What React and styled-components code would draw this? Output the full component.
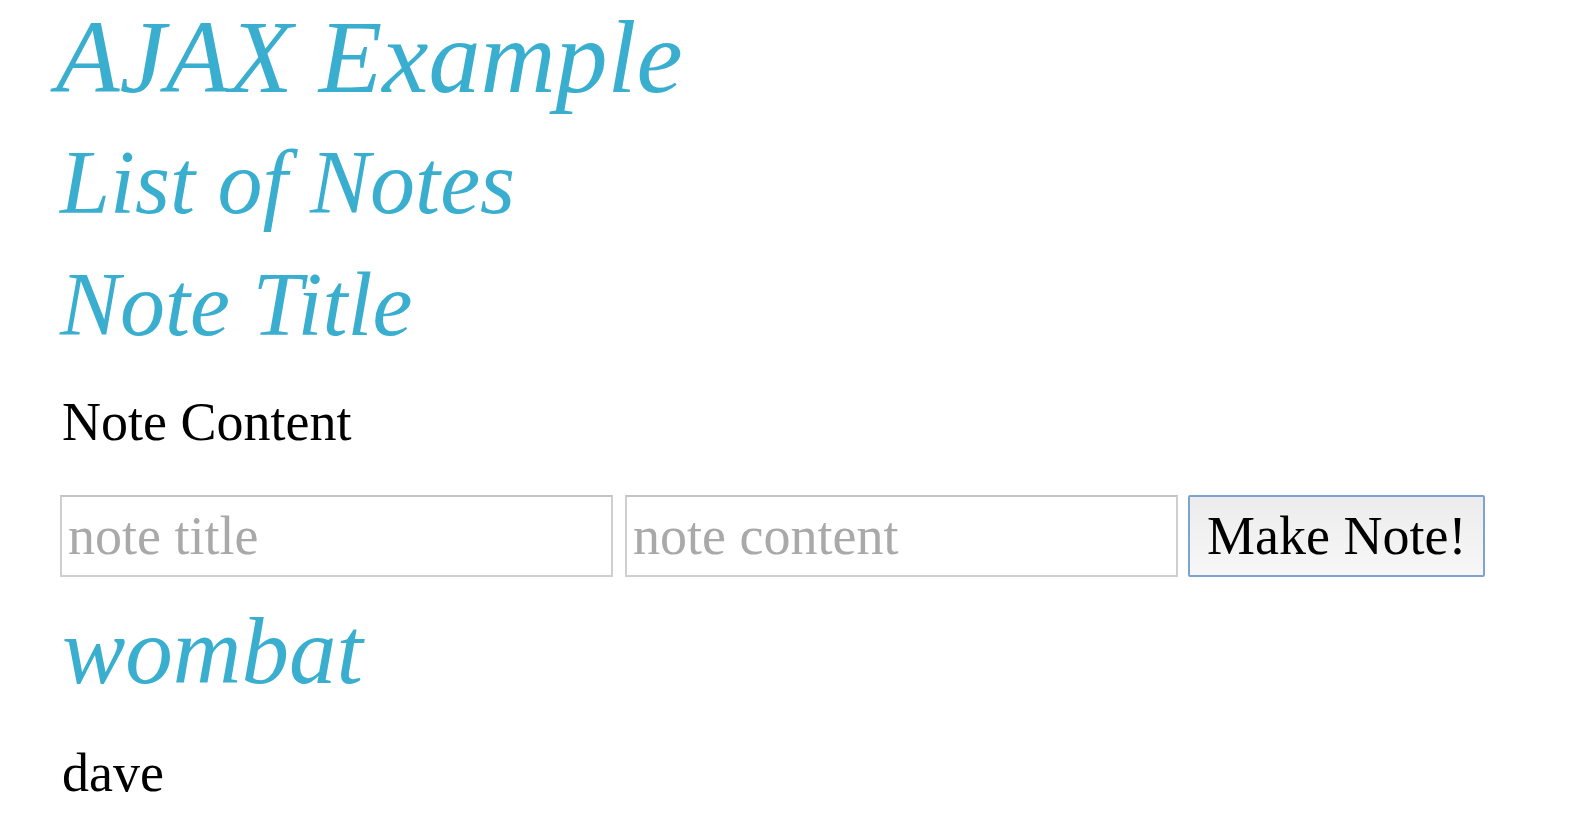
import React, { useState } from "react";
import styled, { createGlobalStyle } from "styled-components";

const GlobalStyle = createGlobalStyle`
  html, body {
    margin: 0;
    padding: 0;
    background: #ffffff;
  }
  body {
    font-family: "Liberation Serif", "Times New Roman", serif;
    color: #000;
  }
`;

const Page = styled.div`
  display: flex;
  flex-direction: column;
  align-items: flex-start;
  padding: 0 0 0 60px;
`;

const Heading = styled.h1`
  margin: ${(p) => p.$top || 0}px 0 0 ${(p) => p.$shift || 0}px;
  font-family: "Liberation Serif", "Times New Roman", serif;
  font-style: italic;
  font-weight: normal;
  color: #39aecf;
  font-size: ${(p) => p.$size || 90}px;
  line-height: ${(p) => p.$lh || 100}px;
`;

const Text = styled.p`
  margin: ${(p) => p.$top || 0}px 0 0 2px;
  font-size: 54px;
  line-height: 60px;
`;

const NoteForm = styled.form`
  display: flex;
  align-items: center;
  margin-top: 43px;
  gap: 12px;
`;

const Field = styled.input`
  box-sizing: border-box;
  width: 553px;
  height: 82px;
  border: 2px solid #cfcfcf;
  border-top-color: #c4c4c4;
  padding: 0 6px;
  font-family: "Liberation Serif", "Times New Roman", serif;
  font-size: 54px;
  color: #000;
  background: #fff;
  outline: none;

  &::placeholder {
    color: #a9a9a9;
  }
`;

const Button = styled.button`
  box-sizing: border-box;
  height: 82px;
  margin-left: -2px;
  padding: 0 17px;
  border: 2px solid #7fa3cf;
  border-radius: 2px;
  background: linear-gradient(#ececec, #f7f7f7);
  font-family: "Liberation Serif", "Times New Roman", serif;
  font-size: 54px;
  color: #000;
  cursor: pointer;
`;

export default function App() {
  const [title, setTitle] = useState("");
  const [content, setContent] = useState("");

  return (
    <>
      <GlobalStyle />
      <Page>
        <Heading $size={104} $lh={110} $top={2} $shift={-4}>AJAX Example</Heading>
        <Heading as="h2" $top={21}>List of Notes</Heading>
        <Heading as="h3" $top={22}>Note Title</Heading>
        <Text $top={37}>Note Content</Text>
        <NoteForm onSubmit={(e) => e.preventDefault()}>
          <Field
            placeholder="note title"
            value={title}
            onChange={(e) => setTitle(e.target.value)}
          />
          <Field
            placeholder="note content"
            value={content}
            onChange={(e) => setContent(e.target.value)}
          />
          <Button type="submit">Make Note!</Button>
        </NoteForm>
        <Heading as="h3" $size={95} $top={24} $shift={2}>wombat</Heading>
        <Text $top={42}>dave</Text>
      </Page>
    </>
  );
}
